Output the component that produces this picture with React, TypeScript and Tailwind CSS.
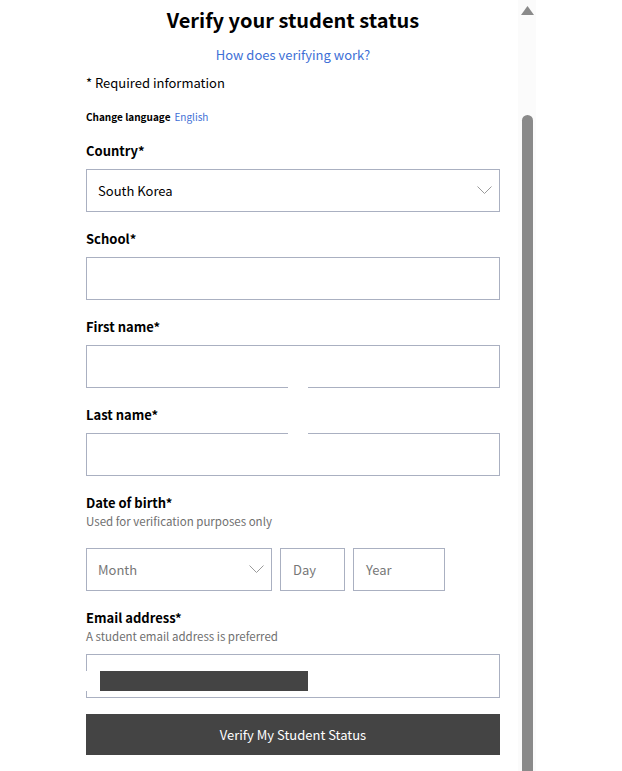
const font = { fontFamily: '"Noto Sans CJK KR", "Noto Sans", sans-serif' };

function Chevron() {
    return (
        <svg width="15" height="9" viewBox="0 0 15 9" fill="none" className="shrink-0">
            <path d="M0.5 0.5 L7.5 7.5 L14.5 0.5" stroke="#9a9a9a" strokeWidth="1" />
        </svg>
    );
}

function Label({ text, hint }: { text: string; hint?: string }) {
    return (
        <div>
            <div className="h-[20px] leading-[20px] text-[13px] font-bold text-black">{text}</div>
            {hint && <div className="h-[16px] leading-[16px] text-[11.5px] text-[#6f6f6f]">{hint}</div>}
        </div>
    );
}

function Field({ className = "", children }: { className?: string; children?: React.ReactNode }) {
    return (
        <div className={`relative h-[43px] shrink-0 border border-[#aab0c1] bg-white flex items-center ${className}`}>
            {children}
        </div>
    );
}

export default function App() {
    return (
        <div className="h-[771px] w-[622px] overflow-hidden bg-white flex pl-[86px]" style={font}>
            <div className="w-[414px] shrink-0">
                <h1 className="pt-[6px] h-[34px] leading-[28px] text-center text-[20px] font-bold text-black">
                    Verify your student status
                </h1>
                <div className="mt-[12px] h-[18px] leading-[18px] text-center text-[13px] text-[#3d6fd6]">
                    How does verifying work?
                </div>
                <div className="mt-[10px] h-[18px] leading-[18px] text-[13px] text-black">* Required information</div>
                <div className="mt-[17px] h-[16px] leading-[16px] text-[10px] flex gap-[4px]">
                    <span className="font-bold text-black">Change language</span>
                    <span className="text-[#3d6fd6]">English</span>
                </div>

                <div className="mt-[16px]">
                    <Label text="Country*" />
                </div>
                <Field className="mt-[8px] justify-between pl-[11px] pr-[7px]">
                    <span className="text-[13px] text-black">South Korea</span>
                    <Chevron />
                </Field>

                <div className="mt-[17px]">
                    <Label text="School*" />
                </div>
                <Field className="mt-[8px]" />

                <div className="mt-[17px]">
                    <Label text="First name*" />
                </div>
                <Field className="mt-[8px]">
                    <div className="absolute left-[201px] top-[41px] w-[20px] h-[48px] bg-white z-10" />
                </Field>

                <div className="mt-[17px]">
                    <Label text="Last name*" />
                </div>
                <Field className="mt-[8px]" />

                <div className="mt-[17px]">
                    <Label text="Date of birth*" hint="Used for verification purposes only" />
                </div>
                <div className="mt-[19px] flex gap-[8px]">
                    <Field className="w-[186px] justify-between pl-[11px] pr-[7px]">
                        <span className="text-[13px] text-[#777]">Month</span>
                        <Chevron />
                    </Field>
                    <Field className="w-[65px] pl-[12px]">
                        <span className="text-[13px] text-[#777]">Day</span>
                    </Field>
                    <Field className="w-[92px] pl-[12px]">
                        <span className="text-[13px] text-[#777]">Year</span>
                    </Field>
                </div>

                <div className="mt-[17px]">
                    <Label text="Email address*" hint="A student email address is preferred" />
                </div>
                <Field className="mt-[10px] h-[44px]">
                    <div className="absolute -left-px top-[16px] h-[20px] flex">
                        <div className="w-[14px] bg-white" />
                        <div className="w-[208px] bg-[#444444]" />
                    </div>
                </Field>

                <button className="mt-[16px] h-[41px] w-full bg-[#444444] text-white text-[13px]">
                    Verify My Student Status
                </button>
                <div className="mt-[13px] text-center text-[12px] leading-[16px] text-[#7a2a2a]">
                    By clicking, you agree to the terms and privacy policy shown below
                </div>
            </div>

            <div className="ml-[18px] w-[18px] shrink-0 h-full bg-[#fbfbfb] flex flex-col items-center">
                <svg width="13" height="9" viewBox="0 0 13 9" className="mt-[6px] ml-px shrink-0">
                    <path d="M6.5 0 L13 9 L0 9 Z" fill="#8a8a8a" />
                </svg>
                <div className="mt-[100px] ml-px w-[11px] flex-1 rounded-t-full bg-[#8a8a8a]" />
            </div>
        </div>
    );
}
